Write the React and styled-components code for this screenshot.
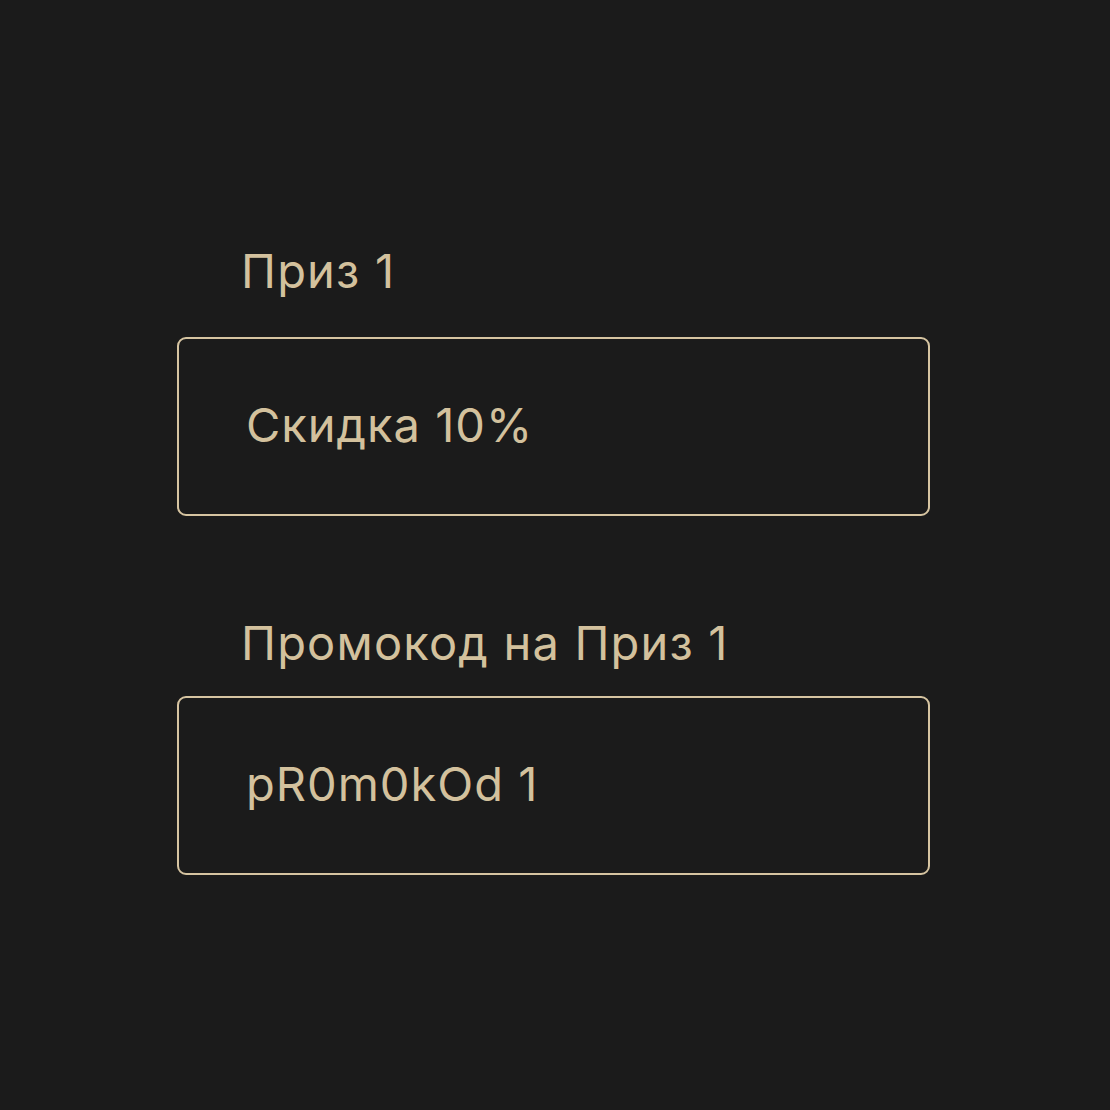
import React from 'react';
import styled, { createGlobalStyle } from "styled-components";

const GlobalStyle = createGlobalStyle`
  html, body {
    margin: 0;
    padding: 0;
    background: #1b1b1b;
  }
  body {
    font-family: Inter, "Noto Sans", sans-serif;
  }
`;

const Page = styled.div`
  width: 1110px;
  height: 1110px;
  background: #1b1b1b;
  box-sizing: border-box;
  padding: 239px 0 0 177px;
`;

const Form = styled.div`
  width: 753px;
  display: flex;
  flex-direction: column;
  gap: 95px;
`;

const Field = styled.div`
  display: flex;
  flex-direction: column;
`;

const Label = styled.div`
  color: #d3c19d;
  font-size: 47px;
  line-height: 64px;
  letter-spacing: 1.2px;
  padding-left: 64px;
  margin-bottom: ${p => p.$gap}px;
`;

const Box = styled.div`
  height: 179px;
  box-sizing: border-box;
  border: 2px solid #d6c4a1;
  border-radius: 9px;
  display: flex;
  align-items: center;
  padding: 0 0 4px 67px;
  color: #d3c19d;
  font-size: 47px;
  letter-spacing: 1px;
`;

const fields = [
  { label: "Приз 1", value: "Скидка 10%", gap: 34 },
  { label: "Промокод на Приз 1", value: "pR0m0kOd 1", gap: 21 },
];

function App() {
  return (
    <>
      <GlobalStyle />
      <Page>
        <Form>
          {fields.map((f, i) => (
            <Field key={i}>
              <Label $gap={f.gap}>{f.label}</Label>
              <Box>{f.value}</Box>
            </Field>
          ))}
        </Form>
      </Page>
    </>
  );
}

export default App;
